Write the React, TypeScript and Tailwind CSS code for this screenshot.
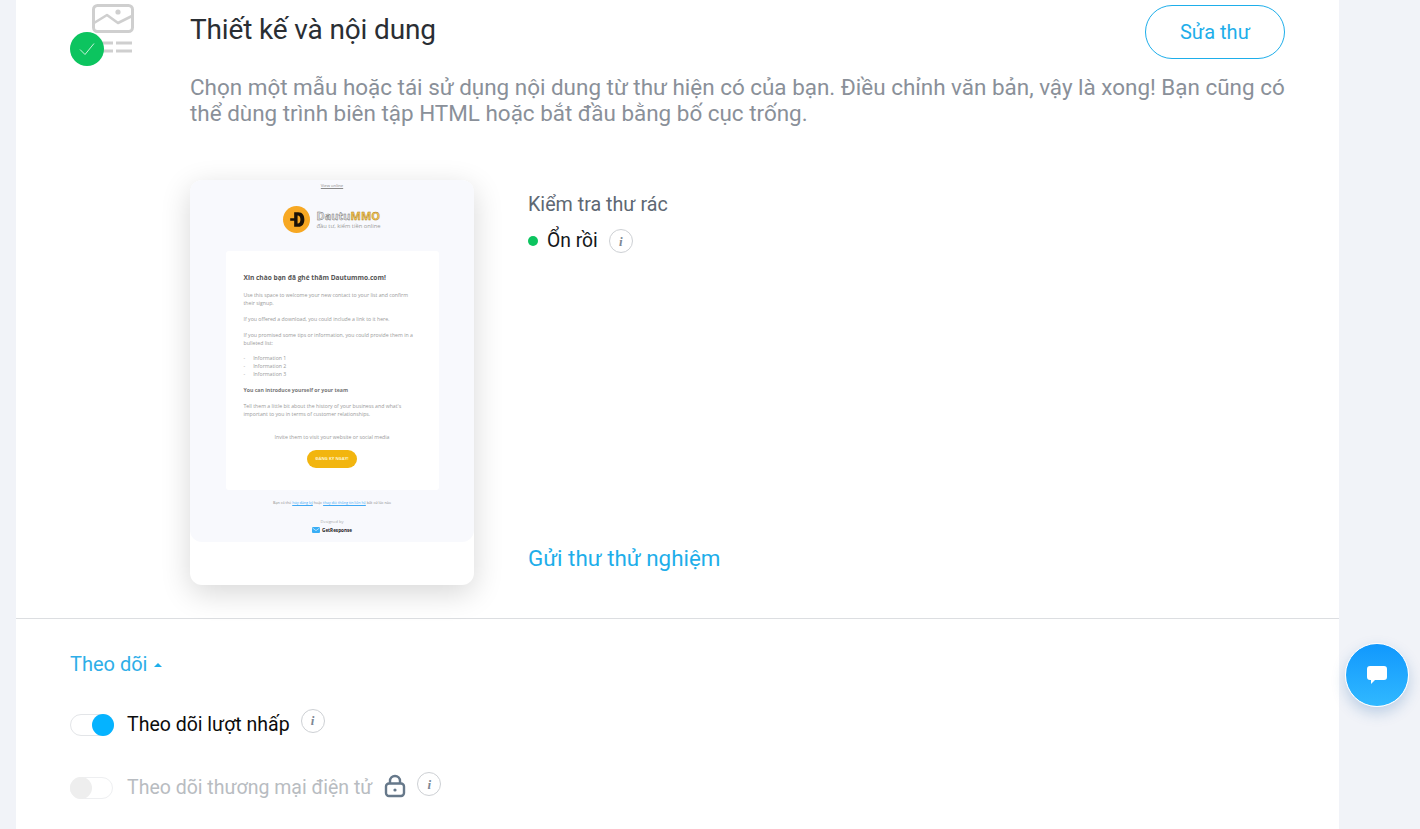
import React from "react";

function InfoDot({ className = "" }: { className?: string }) {
  return (
    <span className={`flex h-[24px] w-[24px] items-center justify-center rounded-full border border-[#cdd0d4] bg-white ${className}`}>
      <span className="font-['Liberation_Serif',serif] text-[13px] font-bold italic leading-none text-[#7d8794]">i</span>
    </span>
  );
}

function TemplateIcon() {
  return (
    <div className="relative h-[66px] w-[66px]">
      <svg className="absolute left-0 top-0" width="66" height="66" viewBox="0 0 66 66" fill="none">
        <rect x="23.500" y="5.500" width="39" height="26" rx="4" stroke="#cfcfcf" strokeWidth="3" />
        <path d="M24 23 L37 15 L48 23 L62 16" stroke="#cfcfcf" strokeWidth="2.600" strokeLinejoin="round" />
        <circle cx="48" cy="12" r="2.600" fill="#cfcfcf" />
        <path d="M30 43H43M46 43H62M30 51H43M46 51H62" stroke="#cfcfcf" strokeWidth="2.800" />
      </svg>
      <div className="absolute left-0 top-[32px] flex h-[34px] w-[34px] items-center justify-center rounded-full bg-[#0cc45f]">
        <svg width="16" height="14" viewBox="0 0 16 14" fill="none">
          <path d="M1 7.500 L6 12.500 L15 1.500" stroke="#c9f2da" strokeWidth="1" />
        </svg>
      </div>
    </div>
  );
}

function EmailPreview() {
  return (
    <div className="h-[405px] w-[284px] overflow-hidden rounded-[12px] bg-white font-['Open_Sans',sans-serif] shadow-[0_8px_30px_rgba(0,0,0,0.16)]">
      <div className="flex h-[362px] flex-col items-center rounded-b-[12px] bg-[#f8f9fd] pt-[3px]">
        <span className="text-[4.200px] leading-[5px] text-[#8a8a8a] underline">View online</span>
        <div className="mt-[18px] flex items-center gap-[6px]">
          <span className="flex h-[27px] w-[27px] items-center justify-center rounded-full bg-[#f7a823]">
            <svg width="16" height="17" viewBox="0 0 14 15">
              <path d="M4.500 1H8C12 1 13.500 4 13.500 7.500S12 14 8 14H4.500V8.500H1V6.500H4.500ZM7.500 4V11C9.500 11 10 9.500 10 7.500S9.500 4 7.500 4Z" fill="#1a1208" />
            </svg>
          </span>
          <div className="flex flex-col">
            <span className="text-[11px] font-bold leading-[13px] text-[#e8e8e8] [-webkit-text-stroke:0.4px_#666]">
              Dautu<span className="text-[#f4c65a] [-webkit-text-stroke:0.4px_#a87a10]">MMO</span>
            </span>
            <span className="text-[5.800px] leading-[8px] text-[#999]">đầu tư, kiếm tiền online</span>
          </div>
        </div>
        <div className="mt-[18px] flex h-[239px] w-[213px] flex-col rounded-[3px] bg-white px-[18px] pt-[23px] text-[5.200px] leading-[8px] text-[#9a9a9a]">
          <p className="text-[6.600px] font-bold leading-[8px] text-[#555]">Xin chào bạn đã ghé thăm Dautummo.com!</p>
          <p className="mt-[9px]">Use this space to welcome your new contact to your list and confirm their signup.</p>
          <p className="mt-[8px]">If you offered a download, you could include a link to it here.</p>
          <p className="mt-[8px]">If you promised some tips or information, you could provide them in a bulleted list:</p>
          <div className="mt-[7px] flex flex-col">
            <span className="flex gap-[8px]"><span>-</span>Information 1</span>
            <span className="flex gap-[8px]"><span>-</span>Information 2</span>
            <span className="flex gap-[8px]"><span>-</span>Information 3</span>
          </div>
          <p className="mt-[8px] font-bold text-[#777]">You can introduce yourself or your team</p>
          <p className="mt-[8px]">Tell them a little bit about the history of your business and what's important to you in terms of customer relationships.</p>
          <p className="mt-[15px] text-center">Invite them to visit your website or social media</p>
          <div className="mt-[9px] flex justify-center">
            <span className="flex h-[18px] w-[50px] items-center justify-center rounded-full bg-[#f2b50f] text-[4.200px] font-bold text-[#fff4d0]">ĐĂNG KÝ NGAY!</span>
          </div>
        </div>
        <p className="mt-[10px] text-[3.700px] leading-[6px] text-[#888]">
          Bạn có thể <span className="text-[#3fa9f5] underline">hủy đăng ký</span> hoặc <span className="text-[#3fa9f5] underline">thay đổi thông tin liên hệ</span> bất cứ lúc nào
        </p>
        <span className="mt-[13px] text-[4px] leading-[5px] text-[#aaa]">Designed by</span>
        <div className="mt-[3px] flex items-center gap-[2px]">
          <svg width="8" height="6" viewBox="0 0 8 6">
            <rect width="8" height="6" rx="1" fill="#39aef5" />
            <path d="M0.500 1 L4 3.600 L7.500 1" stroke="#fff" strokeWidth="0.600" fill="none" />
          </svg>
          <span className="text-[4.600px] font-bold leading-[6px] text-[#222]">GetResponse</span>
        </div>
      </div>
    </div>
  );
}

export default function App() {
  return (
    <div className="relative h-[829px] w-full overflow-hidden bg-[#f1f3f8] pl-[16px] font-['Roboto',sans-serif]">
      <div className="h-full w-[1323px] bg-white">
        <section className="flex h-[619px] border-b border-[#dcdee1] pl-[54px]">
          <div className="w-[120px]">
            <TemplateIcon />
          </div>
          <div className="w-[1095px] pt-[5px]">
            <div className="flex items-start justify-between">
              <h2 className="text-[28px] font-normal leading-[50px] tracking-[-0.14px] text-[#2a2e33]">Thiết kế và nội dung</h2>
              <button className="h-[54px] w-[140px] rounded-full border border-[#1eaeea] bg-white text-[20px] text-[#1eaeea]">Sửa thư</button>
            </div>
            <p className="mt-[15px] text-[22.450px] leading-[26px] text-[#8a9099]">
              Chọn một mẫu hoặc tái sử dụng nội dung từ thư hiện có của bạn. Điều chỉnh văn bản, vậy là xong! Bạn cũng có thể dùng trình biên tập HTML hoặc bắt đầu bằng bố cục trống.
            </p>
            <div className="mt-[54px] flex">
              <EmailPreview />
              <div className="ml-[54px] flex h-[405px] flex-col">
                <span className="mt-[14px] text-[19.700px] leading-[22px] text-[#5e6873]">Kiểm tra thư rác</span>
                <div className="mt-[13px] flex items-center">
                  <span className="h-[10px] w-[10px] rounded-full bg-[#0cc45f]" />
                  <span className="ml-[9px] text-[19.300px] leading-[24px] text-[#14171a]">Ổn rồi</span>
                  <InfoDot className="ml-[11px]" />
                </div>
                <span className="mt-auto mb-[14px] text-[22.400px] leading-[26px] text-[#1eaeea]">Gửi thư thử nghiệm</span>
              </div>
            </div>
          </div>
        </section>
        <section className="pl-[54px]">
          <div className="mt-[34px] flex items-center gap-[7px] text-[20px] leading-[22px] text-[#2eaee8]">
            <span>Theo dõi</span>
            <span className="mt-[1px] h-0 w-0 border-x-[4px] border-b-[4px] border-x-transparent border-b-[#1eaeea]" />
          </div>
          <div className="mt-[37px] flex items-center">
            <span className="flex h-[22px] w-[44px] items-center justify-end rounded-full border border-[#e3e5e8] bg-white">
              <span className="-mr-px h-[22px] w-[22px] rounded-full bg-[#05b3ff]" />
            </span>
            <span className="ml-[13px] mt-[1px] text-[19.500px] leading-[24px] text-[#0c0c0c]">Theo dõi lượt nhấp</span>
            <InfoDot className="-mt-[8px] ml-[11px]" />
          </div>
          <div className="mt-[39px] flex items-center">
            <span className="flex h-[22px] w-[43px] items-center rounded-full border border-[#eeeff1] bg-white">
              <span className="-ml-px h-[22px] w-[22px] rounded-full bg-[#eeeeee]" />
            </span>
            <span className="ml-[14px] text-[19.500px] leading-[24px] text-[#b8bcc1]">Theo dõi thương mại điện tử</span>
            <svg className="-mt-[5px] ml-[12px]" width="22" height="24" viewBox="0 0 22 24" fill="none">
              <rect x="2" y="9.500" width="18" height="12.500" rx="3" stroke="#66788a" strokeWidth="2.400" />
              <path d="M6 9.500V7a5 5 0 0 1 10 0v2.500" stroke="#66788a" strokeWidth="2.400" />
              <circle cx="11" cy="16" r="1.600" fill="#66788a" />
            </svg>
            <InfoDot className="-mt-[8px] ml-[11px]" />
          </div>
        </section>
      </div>
      <div className="absolute left-[1345px] top-[643px] flex h-[64px] w-[64px] items-center justify-center rounded-full border border-white bg-gradient-to-b from-[#1098fd] to-[#30b8ff] shadow-[0_6px_14px_rgba(30,100,170,0.25)]">
        <svg width="20" height="18" viewBox="0 0 20 18">
          <path d="M3 0H17A3 3 0 0 1 20 3V11A3 3 0 0 1 17 14H8L4 18V14H3A3 3 0 0 1 0 11V3A3 3 0 0 1 3 0Z" fill="#fff" />
        </svg>
      </div>
    </div>
  );
}
